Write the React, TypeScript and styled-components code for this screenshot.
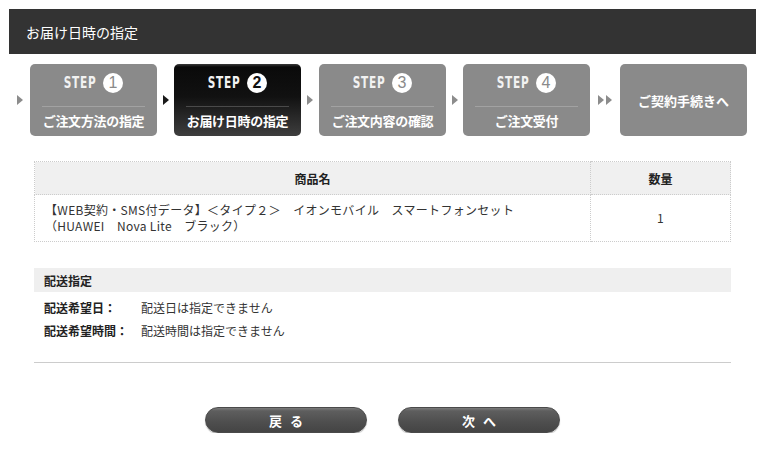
import styled, { createGlobalStyle } from 'styled-components';

const GlobalStyle = createGlobalStyle`
  html, body {
    margin: 0;
    padding: 0;
    background: #fff;
  }
  body {
    font-family: "Noto Sans CJK JP", "Noto Sans", sans-serif;
    color: #333;
    font-size: 12px;
  }
`;

type Step = { no: number; label: string };

const steps: Step[] = [
  { no: 1, label: 'ご注文方法の指定' },
  { no: 2, label: 'お届け日時の指定' },
  { no: 3, label: 'ご注文内容の確認' },
  { no: 4, label: 'ご注文受付' },
];

const current = 2;

export default function App() {
  return (
    <Page>
      <GlobalStyle />
      <TitleBar>お届け日時の指定</TitleBar>

      <StepRow>
        {steps.map((s) => (
          <StepGroup key={s.no}>
            <ArrowSlot $width={s.no === 1 ? 21 : s.no === 3 ? 18 : 17}>
              <Arrow $dark={s.no === current} />
            </ArrowSlot>
            <StepBox $active={s.no === current}>
              <StepHead>
                <StepWord>
                  <span>STEP</span>
                </StepWord>
                <StepNo $active={s.no === current}>{s.no}</StepNo>
              </StepHead>
              <StepRule $active={s.no === current} />
              <StepLabel>{s.label}</StepLabel>
            </StepBox>
          </StepGroup>
        ))}
        <ArrowSlot $width={30}>
          <Arrow />
          <Arrow />
        </ArrowSlot>
        <FinalBox>ご契約手続きへ</FinalBox>
      </StepRow>

      <Content>
        <ItemTable>
          <thead>
            <tr>
              <HeadCell>商品名</HeadCell>
              <HeadCell $width={140}>数量</HeadCell>
            </tr>
          </thead>
          <tbody>
            <tr>
              <BodyCell>
                【WEB契約・SMS付データ】＜タイプ２＞　イオンモバイル　スマートフォンセット
                <br />
                （HUAWEI　Nova Lite　ブラック）
              </BodyCell>
              <BodyCell $center>1</BodyCell>
            </tr>
          </tbody>
        </ItemTable>

        <SectionBar>配送指定</SectionBar>
        <InfoList>
          <InfoRow>
            <InfoLabel>配送希望日：</InfoLabel>
            <InfoValue>配送日は指定できません</InfoValue>
          </InfoRow>
          <InfoRow>
            <InfoLabel>配送希望時間：</InfoLabel>
            <InfoValue>配送時間は指定できません</InfoValue>
          </InfoRow>
        </InfoList>

        <Divider />

        <ButtonRow>
          <PillButton>戻る</PillButton>
          <PillButton>次へ</PillButton>
        </ButtonRow>
      </Content>
    </Page>
  );
}

const Page = styled.div`
  padding: 9px 8px 0 9px;
`;

const TitleBar = styled.div`
  height: 45px;
  background: #333;
  color: #fff;
  font-size: 14px;
  display: flex;
  align-items: center;
  padding-left: 17px;
`;

const StepRow = styled.div`
  display: flex;
  align-items: center;
  margin-top: 10px;
  height: 72px;
`;

const StepGroup = styled.div`
  display: flex;
  align-items: center;
  height: 100%;
`;

const ArrowSlot = styled.div<{ $width: number }>`
  width: ${(p) => p.$width}px;
  display: flex;
  justify-content: center;
  align-items: center;
  gap: 2px;
`;

const Arrow = styled.span<{ $dark?: boolean }>`
  width: 0;
  height: 0;
  border-top: 5px solid transparent;
  border-bottom: 5px solid transparent;
  border-left: 6px solid ${(p) => (p.$dark ? '#1a1a1a' : '#8c8c8c')};
`;

const StepBox = styled.div<{ $active?: boolean }>`
  width: 127px;
  height: 72px;
  box-sizing: border-box;
  border-radius: 5px;
  padding: 9px 12px 0;
  display: flex;
  flex-direction: column;
  align-items: stretch;
  color: #fff;
  background: ${(p) =>
    p.$active
      ? 'linear-gradient(#3a3a3a 0, #0a0a0a 3px, #111 45%, #3e3e3e 100%)'
      : '#8a8a8a'};
`;

const StepHead = styled.div`
  height: 20px;
  display: flex;
  justify-content: center;
  align-items: center;
  gap: 7px;
`;

const StepWord = styled.span`
  width: 32px;
  display: inline-flex;
  justify-content: center;
  font-family: "DejaVu Sans Condensed", "DejaVu Sans", sans-serif;
  font-stretch: condensed;
  font-weight: bold;
  font-size: 15px;
  line-height: 20px;
  letter-spacing: 1px;
  color: #f2f2f2;
  white-space: nowrap;

  span {
    display: inline-block;
    transform: scaleX(0.78);
  }
`;

const StepNo = styled.span<{ $active?: boolean }>`
  width: 20px;
  height: 20px;
  border-radius: 50%;
  background: #fff;
  color: ${(p) => (p.$active ? '#111' : '#8a8a8a')};
  font-family: "Liberation Sans", sans-serif;
  font-weight: ${(p) => (p.$active ? 'bold' : 'normal')};
  font-size: 16px;
  line-height: 20px;
  text-align: center;
`;

const StepRule = styled.div<{ $active?: boolean }>`
  height: 1px;
  margin-top: 13px;
  background: ${(p) => (p.$active ? '#4a4a4a' : '#a2a2a2')};
`;

const StepLabel = styled.div`
  margin-top: 5px;
  font-size: 13px;
  font-weight: bold;
  line-height: 18px;
  text-align: center;
  white-space: nowrap;
  letter-spacing: -0.3px;
`;

const FinalBox = styled.div`
  width: 127px;
  height: 72px;
  border-radius: 5px;
  background: #8a8a8a;
  color: #fff;
  font-size: 13px;
  font-weight: bold;
  display: flex;
  align-items: center;
  justify-content: center;
`;

const Content = styled.div`
  padding: 0 25px;
`;

const ItemTable = styled.table`
  width: 100%;
  margin-top: 25px;
  border-collapse: collapse;
  font-size: 12px;
`;

const HeadCell = styled.th<{ $width?: number }>`
  width: ${(p) => (p.$width ? `${p.$width}px` : 'auto')};
  height: 33px;
  padding: 0;
  background: #f0f0f0;
  border: 1px dotted #ccc;
  font-weight: bold;
  color: #222;
  text-align: center;
  box-sizing: border-box;
`;

const BodyCell = styled.td<{ $center?: boolean }>`
  height: 47px;
  padding: 0 10px;
  border: 1px dotted #ccc;
  line-height: 16px;
  letter-spacing: 0.3px;
  text-align: ${(p) => (p.$center ? 'center' : 'left')};
  vertical-align: middle;
  box-sizing: border-box;
`;

const SectionBar = styled.div`
  margin-top: 26px;
  height: 24px;
  background: #efefef;
  padding-left: 10px;
  display: flex;
  align-items: center;
  font-weight: bold;
  color: #222;
`;

const InfoList = styled.div`
  padding: 4px 10px 0;
`;

const InfoRow = styled.div`
  display: flex;
  height: 23px;
  align-items: center;
`;

const InfoLabel = styled.span`
  width: 97px;
  font-weight: bold;
  color: #222;
`;

const InfoValue = styled.span`
  color: #333;
`;

const Divider = styled.div`
  margin-top: 20px;
  height: 1px;
  background: #ccc;
`;

const ButtonRow = styled.div`
  display: flex;
  justify-content: center;
  gap: 31px;
  margin-top: 44px;
`;

const PillButton = styled.button`
  width: 162px;
  height: 26px;
  border-radius: 13px;
  border: 1px solid #4a4a4a;
  background: linear-gradient(#7a7a7a 0, #5e5e5e 3px, #4e4e4e 60%, #444 100%);
  box-shadow: 0 1px 1px rgba(0, 0, 0, 0.25);
  color: #fff;
  font-family: "Noto Sans CJK JP", sans-serif;
  font-size: 13px;
  font-weight: bold;
  letter-spacing: 8px;
  text-indent: 8px;
  padding: 0;
  cursor: pointer;
`;
